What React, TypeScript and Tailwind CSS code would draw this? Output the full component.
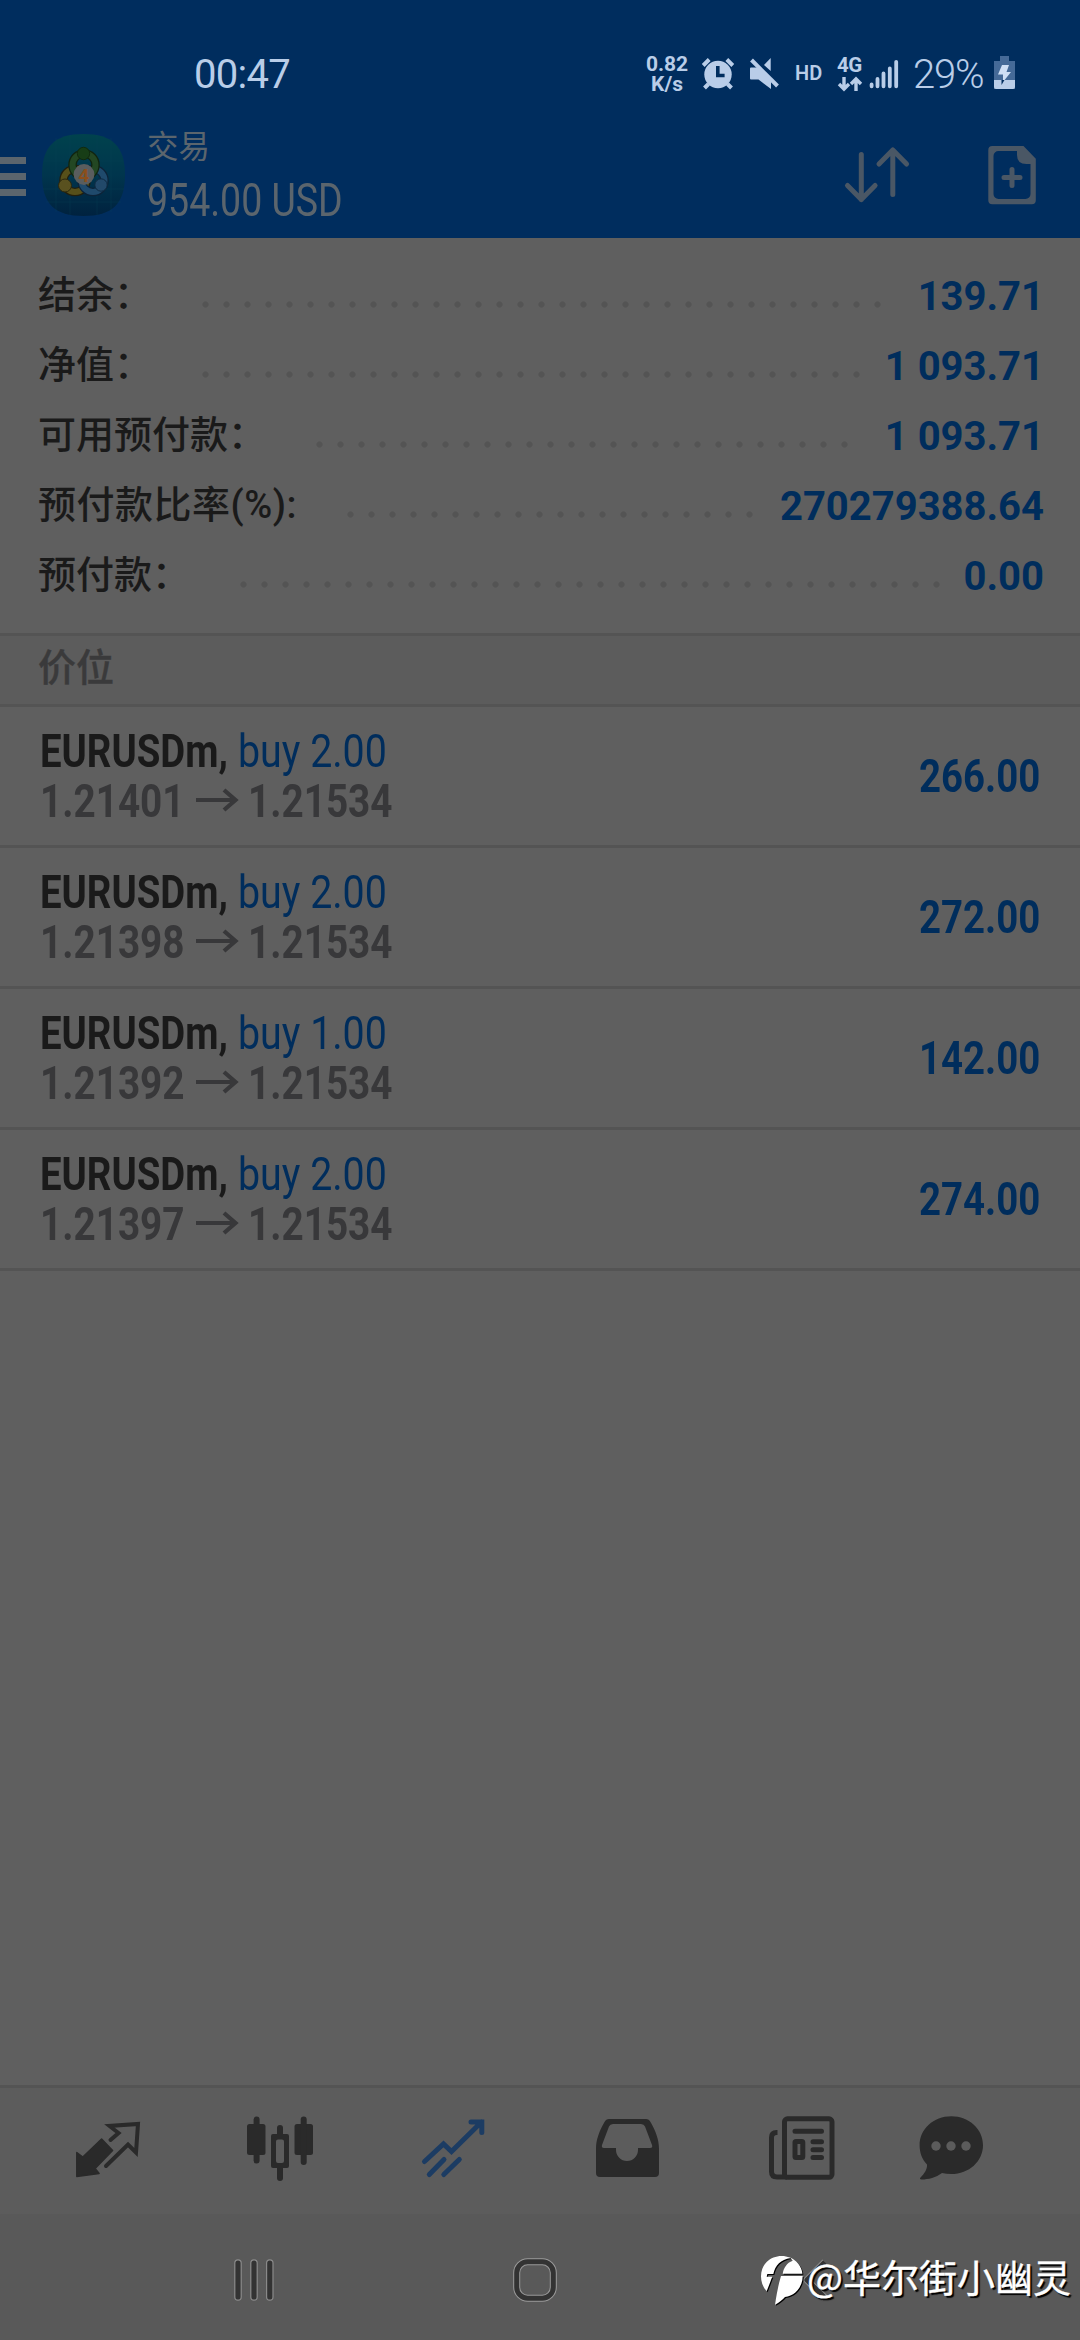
import React from "react";

type Account = { label: string; value: string; spacing: string; dots: string };

const account: Account[] = [
  { label: "结余：", value: "139.71", spacing: "tracking-normal", dots: "w-[693px]" },
  { label: "净值：", value: "1 093.71", spacing: "tracking-normal", dots: "w-[672px]" },
  { label: "可用预付款：", value: "1 093.71", spacing: "tracking-normal", dots: "w-[546px]" },
  { label: "预付款比率(%):", value: "270279388.64", spacing: "tracking-[0.5px]", dots: "w-[420px]" },
  { label: "预付款：", value: "0.00", spacing: "tracking-normal", dots: "w-[714px]" },
];

const positions = [
  { volume: "2.00", open: "1.21401", profit: "266.00" },
  { volume: "2.00", open: "1.21398", profit: "272.00" },
  { volume: "1.00", open: "1.21392", profit: "142.00" },
  { volume: "2.00", open: "1.21397", profit: "274.00" },
];

function StatusBar() {
  return (
    <div className="flex h-[110px] items-start text-[#b9cde8]">
      <span className="ml-[194px] mt-[51px] w-[450px] text-[40px] leading-[48px] tracking-[-0.7px]">00:47</span>
      <div className="mt-[54px] w-[46px] text-center text-[21px] font-bold leading-[20px]">
        <div>0.82</div>
        <div>K/s</div>
      </div>
      <svg className="ml-[11px] mt-[56px]" width="34" height="36" viewBox="701 56 34 36" fill="none" stroke="currentColor">
        <circle cx="718" cy="74.500" r="13.700" fill="currentColor" stroke="none" />
        <path d="M703.200 65.500l6-6M732.800 65.500l-6-6M708.500 84l-4 4M727.500 84l4 4" strokeWidth="4" />
        <path d="M717.800 66v9.500h6.800" stroke="#002d5e" strokeWidth="3.600" />
      </svg>
      <svg className="ml-[13px] mt-[56px]" width="34" height="36" viewBox="748 56 34 36" fill="currentColor">
        <path d="M751 67.500h6.500l13.500 13v8.500l-12.500-9.500h-7.500q-1 0-1-1v-10q0-1 1-1zM764 65l6.700-7v13z" />
        <path d="M751.500 60l26 26" stroke="currentColor" strokeWidth="4" />
      </svg>
      <span className="ml-[13px] mt-[61px] w-[30px] text-[20px] font-semibold leading-[24px]">HD</span>
      <div className="ml-[12px] mt-[54px] w-[28px]">
        <div className="text-[20.5px] font-bold leading-[22px] tracking-[-0.5px]">4G</div>
        <svg width="26" height="17" viewBox="836 75 26 17" fill="none" stroke="currentColor" strokeWidth="3.400">
          <path d="M843 76v12M838 83l5 5 5-5M855 90V78M850 83l5-5 5 5" />
        </svg>
      </div>
      <svg className="ml-[3px] mt-[58px]" width="32" height="32" viewBox="867 58 32 32" stroke="currentColor" strokeWidth="3.800" strokeLinecap="round">
        <path d="M870.600 84.500v1.800M876.500 79v7.300M882.500 73.500v12.800M888.800 68.500v17.800M895.200 61.800v24.500" />
      </svg>
      <span className="ml-[13px] mt-[51px] w-[80px] text-[40px] font-[350] leading-[48px] tracking-[-1.2px]">29%</span>
      <svg className="mt-[55px]" width="24" height="36" viewBox="995 55 24 36">
        <path d="M1002 56h9v5h6v28h-21V61h6z" fill="#456a98" />
        <path d="M996 80h21v7q0 2-2 2h-17q-2 0-2-2z" fill="#b9cde8" />
        <path d="M1004 65h7l-2.500 7h4.500l-8 10v-7.500h-5z" fill="#cfdff5" />
        <path d="M1003.500 80h3l-3 5z" fill="#002d5e" />
      </svg>
    </div>
  );
}

function AppIcon() {
  return (
    <svg className="ml-[16px] mt-[24px]" width="83" height="82" viewBox="0 0 83 82">
      <defs>
        <linearGradient id="tile" x1="0" y1="0" x2="0" y2="1">
          <stop offset="0" stopColor="#00424d" />
          <stop offset="0.5" stopColor="#00354d" />
          <stop offset="1" stopColor="#00223f" />
        </linearGradient>
      </defs>
      <path d="M41.500 0C70 0 83 12 83 41S70 82 41.500 82 0 70 0 41 13 0 41.500 0z" fill="url(#tile)" />
      <path d="M14 4v74M28 1v80M55 1v80M69 4v74M2 27h79M1 55h81M4 68h75" stroke="#0b4655" strokeOpacity="0.3" strokeWidth="1" />
      <g fill="none">
        <circle cx="33" cy="46.500" r="11.500" stroke="#221f0e" strokeWidth="8.500" />
        <circle cx="33" cy="46.500" r="11.500" stroke="#57501a" strokeWidth="6" />
        <circle cx="51" cy="46.500" r="11.500" stroke="#0c2338" strokeWidth="8.500" />
        <circle cx="51" cy="46.500" r="11.500" stroke="#1f4a6c" strokeWidth="6" />
        <circle cx="42" cy="31" r="11.500" stroke="#11240f" strokeWidth="8.500" />
        <circle cx="42" cy="31" r="11.500" stroke="#234723" strokeWidth="6" />
      </g>
      <circle cx="41.500" cy="19.500" r="6.200" fill="#173d16" stroke="#102a0f" />
      <circle cx="23" cy="51.500" r="6.500" fill="#59511f" stroke="#2b270f" />
      <circle cx="59" cy="51" r="6.200" fill="#22496a" stroke="#0e2a42" />
      <circle cx="42" cy="40.500" r="10.400" fill="#5a5d5e" />
      <text x="41.800" y="47.500" textAnchor="middle" fontSize="19" fontWeight="700" fill="#8a4f1c" fontFamily="Roboto">4</text>
    </svg>
  );
}

function Toolbar() {
  return (
    <div className="flex h-[128px] items-start text-[#5b656d]">
      <div className="mt-[47px] flex w-[26px] flex-col gap-[9px]">
        <div className="h-[7px] bg-current" />
        <div className="h-[7px] bg-current" />
        <div className="h-[7px] bg-current" />
      </div>
      <AppIcon />
      <div className="ml-[22px] mt-[18px] w-[693px]">
        <div className="text-[31.500px] leading-[40px]">交易</div>
        <div className="mt-[7px] w-max origin-left scale-x-[0.815] text-[46px] leading-[50px]">954.00 USD</div>
      </div>
      <svg className="ml-[1px] mt-[32px]" width="72" height="66" viewBox="840 142 72 66" fill="none" stroke="#4a5765" strokeWidth="5" strokeLinecap="round" strokeLinejoin="round">
        <path d="M860.300 154.500v45M846.500 185.500l13.800 14 13.800-14M891.800 194.500V150M878 164l13.800-14 13.800 14" />
      </svg>
      <svg className="ml-[71px] mt-[34px]" width="56" height="62" viewBox="984 144 56 62" fill="none" stroke="#4a5765">
        <path d="M1023.500 146l12.300 12.800v41.500a4 4 0 0 1-4 4h-39.500a4 4 0 0 1-4-4V150a4 4 0 0 1 4-4zM1017 151h-18.500a5 5 0 0 0-5 5v38a5 5 0 0 0 5 5h27a5 5 0 0 0 5-5v-30h-4q-9.500 0-9.500-9z" fill="#4a5765" stroke="none" fillRule="evenodd" />
        <path d="M1012 169.500v16M1004 177.500h16" strokeWidth="5" strokeLinecap="round" />
      </svg>
    </div>
  );
}

function BottomTabs() {
  return (
    <div className="flex h-[129px] items-start border-t-[3px] border-[#545454] bg-[#5c5c5c] text-[#2a2a2a]">
      <svg className="ml-[72px] mt-[28px]" width="72" height="68" viewBox="72 2116 72 68" fill="currentColor">
        <path d="M76.800 2152.500l6 4.500 18.800-18 11 11.500-17.500 18 4 5-22.300 3z" stroke="currentColor" strokeWidth="1.500" strokeLinejoin="round" />
        <path d="M106 2166l22-21.500 8 8 2-28.500-28.500 2 9 7-8 7" fill="none" stroke="currentColor" strokeWidth="4" strokeLinejoin="miter" strokeLinecap="round" />
      </svg>
      <svg className="ml-[100px] mt-[26px]" width="72" height="70" viewBox="244 2114 72 70" fill="currentColor">
        <rect x="247" y="2124" width="18.500" height="31" rx="2.500" />
        <rect x="253.600" y="2116.500" width="6" height="47" rx="3" />
        <rect x="294.500" y="2124" width="18.500" height="31" rx="2.500" />
        <rect x="300.700" y="2116.500" width="6" height="48.500" rx="3" />
        <rect x="277" y="2125" width="6" height="14" rx="3" />
        <rect x="277" y="2163" width="6" height="18" rx="3" />
        <path d="M273 2134h14q2 0 2 2v30q0 2-2 2h-14q-2 0-2-2v-30q0-2 2-2zM278 2139.500q-2 0-2 2v19.500q0 2 2 2h4q2 0 2-2v-19.500q0-2-2-2z" fillRule="evenodd" />
      </svg>
      <svg className="ml-[102px] mt-[26px]" width="72" height="68" viewBox="418 2114 72 68" fill="none" stroke="#1c3c63" strokeWidth="5" strokeLinecap="round">
        <path d="M424.500 2161.500l19-17.500 8 7.500 30-29.500M471 2122h10.800v10.500M429.300 2174.500l14.700-15M443.800 2174.500l15.500-15" />
      </svg>
      <svg className="ml-[102px] mt-[28px]" width="70" height="64" viewBox="592 2116 70 64" fill="currentColor">
        <path d="M609 2119h37q3 0 4.500 3c5 9 8.500 17 8.500 27v24q0 4-4 4h-55q-4 0-4-4v-24c0-10 3.500-18 8.500-27q1.500-3 4.500-3zM613 2124q-3 0-4 2.500l-7 18.500q-.8 3 2 3h12v2a11 11 0 0 0 22 0v-2h12q3 0 2-3l-7-18.500q-1-2.500-4-2.500z" fillRule="evenodd" />
      </svg>
      <svg className="ml-[104px] mt-[26px]" width="72" height="68" viewBox="766 2114 72 68" fill="none" stroke="currentColor" strokeWidth="5">
        <rect x="784.500" y="2118.800" width="47.500" height="58.500" rx="3" />
        <path d="M777.500 2132.500h-1q-5 0-5 5v34q0 5.500 5.500 5.500h10" />
        <path d="M795 2131.300h26.500M813 2141.700h8.500M813 2149.700h8.500M813 2157.500h8.500" strokeLinecap="round" />
        <rect x="795" y="2141.500" width="7.800" height="16" rx="1" />
      </svg>
      <svg className="ml-[78px] mt-[26px]" width="72" height="68" viewBox="916 2114 72 68" fill="currentColor">
        <path d="M951.300 2116.300c17.800 0 31.700 12.800 31.700 28.900 0 16-13.900 28.800-31.700 28.800q-5 0-9.300-1c-6 4.500-13.500 6.500-20.500 6.500q-2.500-.3-1-2c4-4 7-8.500 6.500-13-4.800-5-7.400-11.500-7.400-19.300 0-16.100 13.900-28.900 31.700-28.900z" />
        <g fill="#5c5c5c">
          <circle cx="936" cy="2146" r="4.700" />
          <circle cx="951" cy="2146" r="4.700" />
          <circle cx="966" cy="2146" r="4.700" />
        </g>
      </svg>
    </div>
  );
}

function SystemNav() {
  return (
    <div className="relative flex h-[126px] items-start bg-[#595959]">
      <svg className="ml-[232px] mt-[42px]" width="44" height="48" viewBox="232 2256 44 48" strokeLinecap="round">
        <path d="M238 2263v34M254 2263v34M269.800 2263v34" stroke="#8c8c8c" strokeWidth="7.500" />
        <path d="M238 2263v34M254 2263v34M269.800 2263v34" stroke="#333333" strokeWidth="5.200" />
      </svg>
      <svg className="ml-[234px] mt-[42px]" width="50" height="48" viewBox="510 2256 50 48" fill="none">
        <rect x="516.700" y="2261.700" width="36.600" height="36.600" rx="11" stroke="#9a9a9a" strokeWidth="7" />
        <rect x="516.700" y="2261.700" width="36.600" height="36.600" rx="11" stroke="#333333" strokeWidth="5" />
      </svg>
      <svg className="ml-[240px] mt-[42px]" width="32" height="48" viewBox="800 2256 32 48" fill="none" strokeLinejoin="round">
        <path d="M825 2262l-18 18 18 18" stroke="#8c8c8c" strokeWidth="7" />
        <path d="M825 2262l-18 18 18 18" stroke="#333333" strokeWidth="5" />
      </svg>
      <div className="absolute left-[760px] top-[40px] flex items-start text-white">
        <svg className="drop-shadow-[1.5px_1.5px_0.5px_#000]" width="45" height="54" viewBox="30 28 135 162">
          <mask id="cut">
            <rect x="30" y="28" width="135" height="162" fill="#fff" />
            <path d="M46 150C56 125 62 108 67 96L50 96L52 88H70C76 62 92 45 122 40L128 48C110 54 101 70 98 87H162V94H93C86 118 79 150 75 182L50 185z" fill="#000" />
          </mask>
          <path mask="url(#cut)" d="M95 34C130 34 158 60 158 95S132 154 105 157C98 165 88 174 75 180L72 152C48 146 33 122 33 95C33 60 60 34 95 34z" fill="#fff" />
        </svg>
        <span className="-mt-[2px] ml-[2px] whitespace-nowrap font-['Noto_Sans_CJK_SC'] text-[38px] leading-[48px] [-webkit-text-stroke:0.4px_#fff] [text-shadow:2px_2px_1px_#000]">@华尔街小幽灵</span>
      </div>
    </div>
  );
}

export default function App() {
  return (
    <div className="flex h-[2340px] w-[1080px] flex-col overflow-hidden bg-[#5f5f5f] font-[Roboto,'Noto_Sans_CJK_SC',sans-serif]">
      <header className="h-[238px] shrink-0 bg-[#002d5e]">
        <StatusBar />
        <Toolbar />
      </header>
      <section className="h-[395px] pt-[22px]">
        {account.map((row) => (
          <div key={row.label} className="flex h-[70px] items-center pl-[38px] pr-[37px]">
            <span className={`${row.spacing} whitespace-nowrap text-[38px] font-medium leading-[70px] text-[#1a1a1a]`}>{row.label}</span>
            <span className={`${row.dots} ml-[43px] mt-[19px] h-[7px] shrink-0 bg-[radial-gradient(circle,#545454_2.600px,transparent_3.600px)] bg-[length:21px_7px]`} />
            <span className="-mr-px ml-auto whitespace-nowrap pt-[4px] text-[40px] font-bold text-[#002d5c]">{row.value}</span>
          </div>
        ))}
      </section>
      <div className="h-[74px] border-y-[3px] border-[#545454] bg-[#5c5c5c] pl-[38px] text-[38px] font-medium leading-[64px] text-[#3a3a3b] [-webkit-text-stroke:0.4px_#3a3a3b]">价位</div>
      <main className="flex-1">
        {positions.map((p) => (
          <div key={p.open} className="flex h-[141px] items-center justify-between border-b-[3px] border-[#545454] pl-[40px] pr-[40px]">
            <div className="text-[46px] leading-[50px]">
              <div className="flex">
                <span className="w-[198px]">
                  <span className="block w-max origin-left scale-x-[0.834] font-bold text-[#1a1a1a]">EURUSDm,</span>
                </span>
                <span className="w-max origin-left scale-x-[0.855] text-[#002d5c]">buy {p.volume}</span>
              </div>
              <div className="flex items-center font-bold text-[#38383a]">
                <span className="w-[153px]">
                  <span className="block w-max origin-left scale-x-[0.842]">{p.open}</span>
                </span>
                <svg className="mb-[2px]" width="46" height="28" viewBox="0 0 46 28" fill="none" stroke="currentColor" strokeWidth="4.200">
                  <path d="M3 14h40M31 4l11.500 10-11.500 10" />
                </svg>
                <span className="ml-[9px] w-max origin-left scale-x-[0.842]">1.21534</span>
              </div>
            </div>
            <span className="w-max origin-right scale-x-[0.835] text-[46px] font-bold text-[#002d5c]">{p.profit}</span>
          </div>
        ))}
      </main>
      <BottomTabs />
      <SystemNav />
    </div>
  );
}
